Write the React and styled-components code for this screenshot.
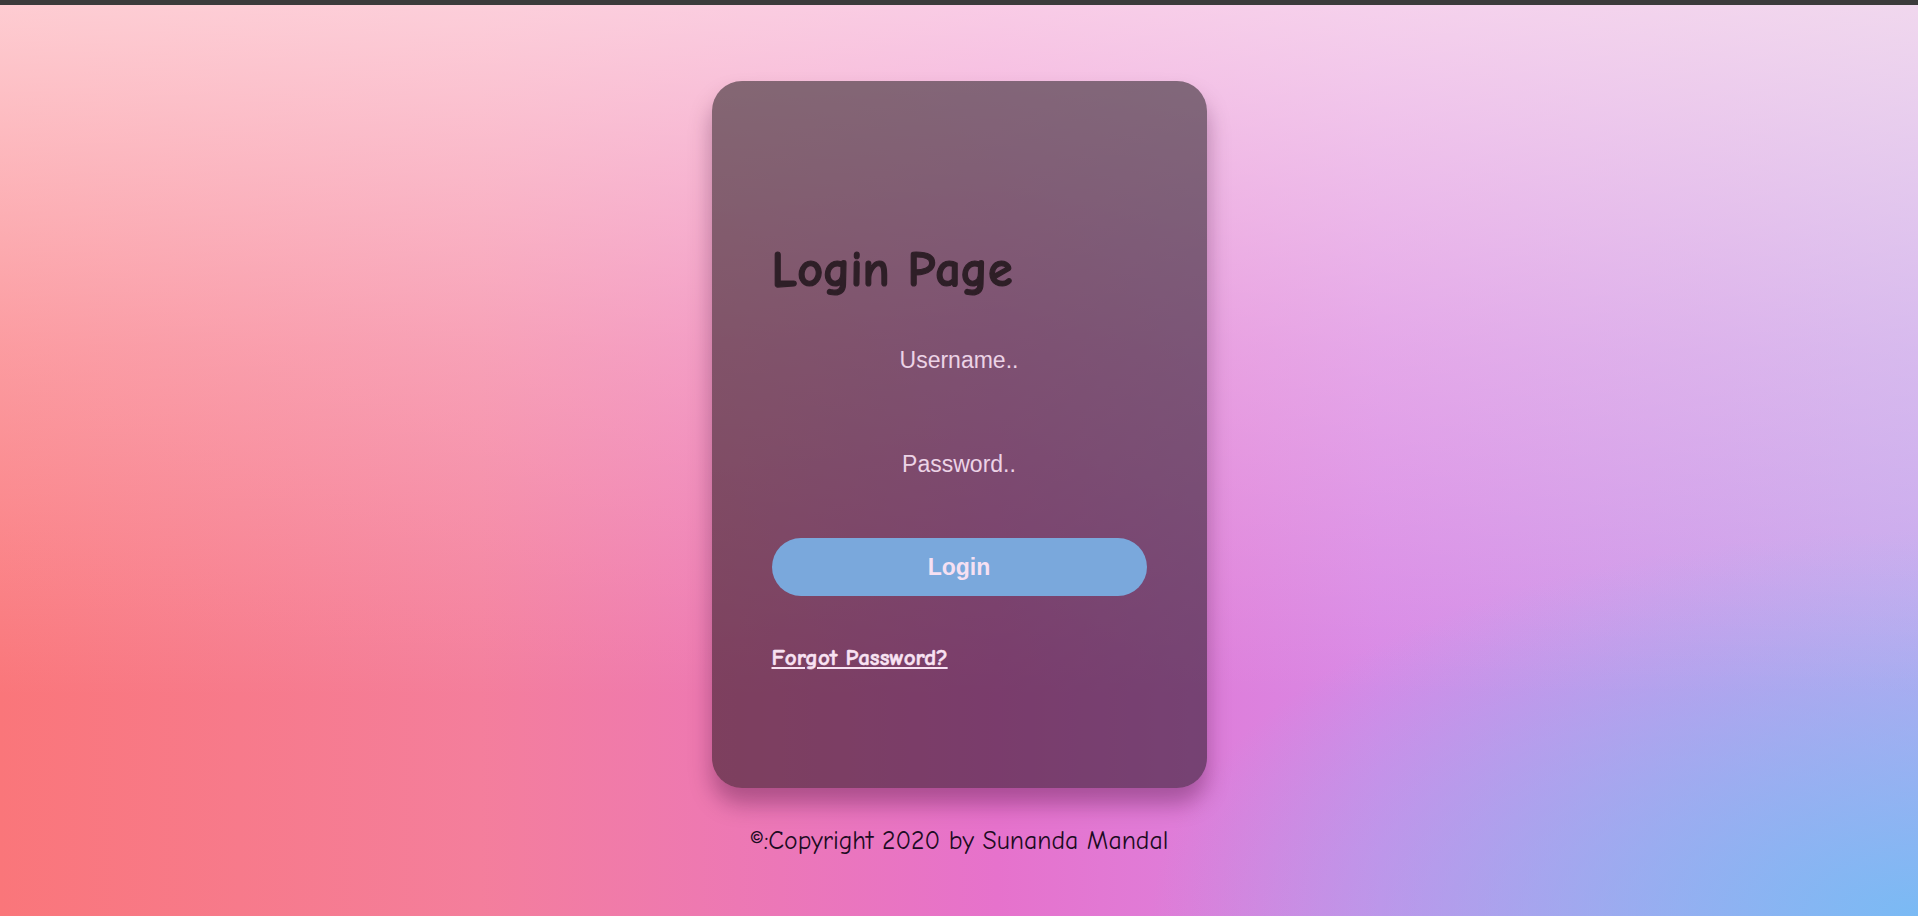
import styled, { createGlobalStyle } from 'styled-components'

const GlobalStyle = createGlobalStyle`
  html, body {
    margin: 0;
    padding: 0;
  }
  body {
    font-family: "Liberation Sans", Arial, sans-serif;
  }
`

const comic = `"Comic Sans MS", "Comic Neue", Lato, sans-serif`

export default function App() {
  return (
    <>
      <GlobalStyle />
      <Page>
        <TopBar />
        <Main>
          <Card>
            <Title>Login Page</Title>
            <Field type="text" placeholder="Username.." />
            <Field type="password" placeholder="Password.." />
            <LoginButton>Login</LoginButton>
            <Forgot href="#">Forgot Password?</Forgot>
          </Card>
          <Copyright>©:Copyright 2020 by Sunanda Mandal</Copyright>
        </Main>
      </Page>
    </>
  )
}

const Page = styled.div`
  width: 100%;
  height: 916px;
  overflow: hidden;
  display: flex;
  flex-direction: column;
  background:
    linear-gradient(to bottom, rgba(255, 232, 238, 0.76) 0%, rgba(255, 232, 238, 0.33) 38%, rgba(255, 232, 238, 0) 76%),
    radial-gradient(ellipse 40% 42% at 100% 100%, rgba(122, 186, 244, 1) 0%, rgba(122, 186, 244, 0) 100%),
    linear-gradient(to right, #fa767a 0%, #f47e9c 25%, #e672cc 52%, #d888e6 72%, #c4a4ee 100%);
`

const TopBar = styled.div`
  height: 5px;
  background: #3b3b3b;
  flex-shrink: 0;
`

const Main = styled.main`
  display: flex;
  flex-direction: column;
  align-items: center;
  padding-top: 76px;
`

const Card = styled.div`
  box-sizing: border-box;
  width: 495px;
  height: 707px;
  border-radius: 30px;
  background: rgba(0, 0, 0, 0.47);
  box-shadow: 0 16px 22px rgba(60, 10, 50, 0.35);
  padding: 158px 60px 0;
  display: flex;
  flex-direction: column;
  align-items: stretch;
`

const Title = styled.h1`
  margin: 0 0 34px;
  font-family: ${comic};
  font-size: 50px;
  font-weight: 700;
  line-height: 62px;
  color: #2e1f27;
  -webkit-text-stroke: 1.2px #2e1f27;
`

const Field = styled.input`
  box-sizing: border-box;
  height: 50px;
  margin-bottom: 54px;
  border: none;
  outline: none;
  background: transparent;
  text-align: center;
  font-family: "Liberation Sans", Arial, sans-serif;
  font-size: 23px;
  color: #f3e0ee;
  &::placeholder {
    color: #ecd3e6;
  }
  &:nth-of-type(2) {
    margin-bottom: 49px;
  }
`

const LoginButton = styled.button`
  height: 58px;
  border: none;
  border-radius: 29px;
  background: #7aa8dc;
  color: #f6e0f2;
  font-family: "Liberation Sans", Arial, sans-serif;
  font-size: 23px;
  font-weight: 700;
  cursor: pointer;
  margin-bottom: 48px;
`

const Forgot = styled.a`
  align-self: flex-start;
  font-family: ${comic};
  font-size: 23px;
  font-weight: 700;
  line-height: 28px;
  color: #f8e2f2;
  text-decoration: underline;
  -webkit-text-stroke: 0.5px #f8e2f2;
`

const Copyright = styled.p`
  margin: 38px 0 0;
  font-family: ${comic};
  font-size: 25.7px;
  line-height: 30px;
  color: #1c0b22;
`
